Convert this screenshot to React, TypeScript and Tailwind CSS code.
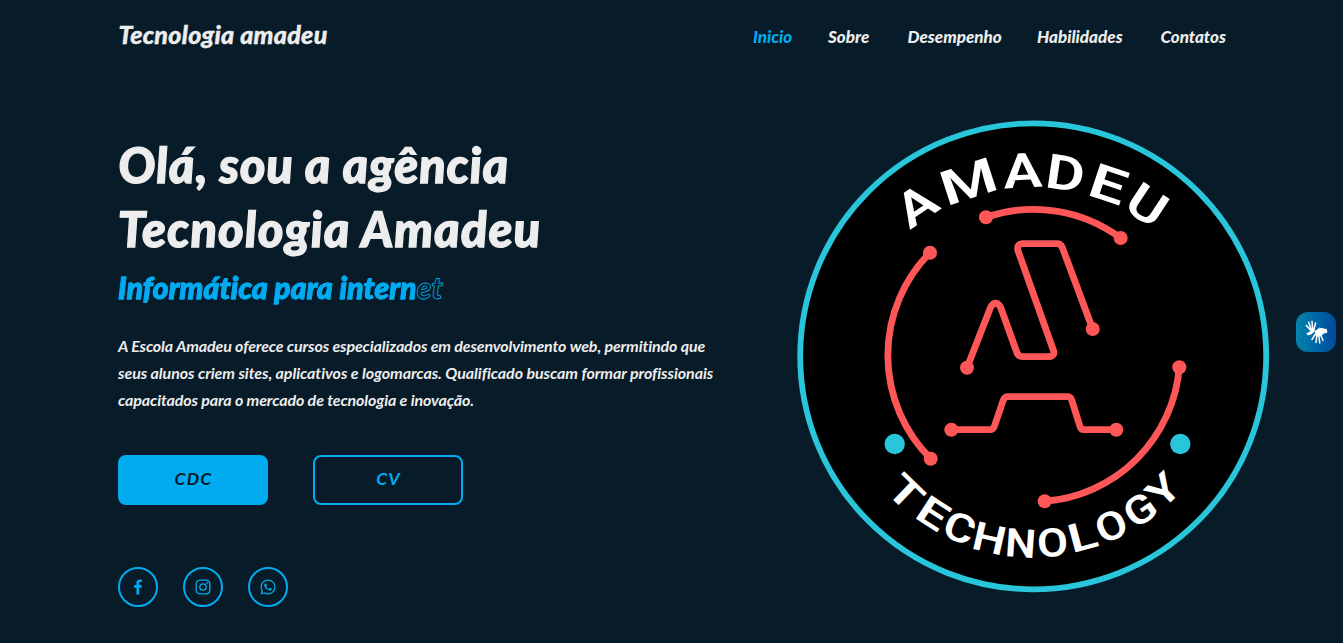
import { BiLogoFacebook, BiLogoInstagram, BiLogoWhatsapp } from "react-icons/bi";

const links = [
  { label: "Inicio", box: "w-[75px] text-[#00abf0]" },
  { label: "Sobre", box: "w-[79.5px]" },
  { label: "Desempenho", box: "w-[129.5px]" },
  { label: "Habilidades", box: "w-[123.5px]" },
  { label: "Contatos", box: "w-[65.5px]" },
];

type Glyph = { ch: string; x: number; y: number; rot: number; w: number };

// Baseline centre, rotation and width of every letter on the upper arc
const topWord: Glyph[] = [
  { ch: "A", x: 926, y: 219, rot: -34, w: 39 },
  { ch: "M", x: 973.5, y: 197.5, rot: -18, w: 57 },
  { ch: "A", x: 1023.5, y: 187.5, rot: -3, w: 39 },
  { ch: "D", x: 1063, y: 190, rot: 8.5, w: 39 },
  { ch: "E", x: 1103, y: 200, rot: 18.5, w: 37 },
  { ch: "U", x: 1138, y: 219, rot: 33.3, w: 38 },
];

const bottomWord: Glyph[] = [
  { ch: "T", x: 896, y: 502.5, rot: 44, w: 34 },
  { ch: "E", x: 925.5, y: 525, rot: 33, w: 30 },
  { ch: "C", x: 954.3, y: 540.5, rot: 23, w: 31 },
  { ch: "H", x: 986.3, y: 552, rot: 13, w: 33 },
  { ch: "N", x: 1019.7, y: 557, rot: 4, w: 31 },
  { ch: "O", x: 1053.5, y: 556.5, rot: -4, w: 31 },
  { ch: "L", x: 1086, y: 549.5, rot: -15, w: 29 },
  { ch: "O", x: 1117, y: 538.5, rot: -25, w: 31 },
  { ch: "G", x: 1148, y: 521, rot: -35, w: 31 },
  { ch: "Y", x: 1172.7, y: 500, rot: -44, w: 30 },
];

const nodes = [
  [930, 252.7], [930.7, 458.7], [986, 217.3], [1120.7, 238], [1179.3, 367.3],
  [1044.7, 501.3], [967, 367.7], [1092.7, 329], [951.3, 429.7], [1116.3, 429.7],
];

function ArcWord({ glyphs, size }: { glyphs: Glyph[]; size: number }) {
  return (
    <g fill="#fff" fontSize={size} className="font-['Roboto',sans-serif] font-semibold">
      {glyphs.map((g, i) => (
        <text
          key={i}
          transform={`translate(${g.x} ${g.y}) rotate(${g.rot})`}
          x={-g.w / 2}
          textLength={g.w}
          lengthAdjust="spacingAndGlyphs"
        >
          {g.ch}
        </text>
      ))}
    </g>
  );
}

function Emblem() {
  return (
    <svg viewBox="797 120 473 473" className="h-[473px] w-[473px] shrink-0">
      <circle cx="1033.2" cy="356.3" r="233" fill="#000" stroke="#29c5da" strokeWidth="5.8" />
      <g fill="none" stroke="#ff5757" strokeWidth="6.8" strokeLinejoin="round">
        <path d="M930 252.7A146 146 0 0 0 930.7 458.7" />
        <path d="M986 217.3A146.5 146.5 0 0 1 1120.7 238" />
        <path d="M1179.3 367.3A146.5 146.5 0 0 1 1044.7 501.3" />
        <path d="M967 367.7L990.7 307Q995.5 299.5 1000.5 307L1016.5 351.5Q1018 356.7 1023 356.7H1049Q1055.5 356 1053.3 350L1017.9 250.5Q1016.5 244 1022.5 243.7H1057Q1060.7 243.7 1062.3 247.5L1092.7 329" />
        <path d="M951.3 429.7H990Q993 429.7 994.3 426.5L1003.3 400Q1004.5 396.7 1008 396.7H1067.5Q1070.5 396.7 1071.7 400L1080 426.5Q1081 429.7 1084 429.7H1116.3" />
      </g>
      <g fill="#ff5757">
        {nodes.map(([x, y]) => (
          <circle key={`${x}-${y}`} cx={x} cy={y} r="7" />
        ))}
      </g>
      <circle cx="894.7" cy="444" r="10.2" fill="#29c5da" />
      <circle cx="1180.3" cy="444" r="10.2" fill="#29c5da" />
      <ArcWord glyphs={topWord} size={48} />
      <ArcWord glyphs={bottomWord} size={39.5} />
    </svg>
  );
}

function HandsIcon() {
  return (
    <svg viewBox="0 0 40 40" className="h-10 w-10" fill="none" stroke="#fff" strokeLinecap="round" strokeLinejoin="round">
      <g strokeWidth="1.5">
        <path d="M14.5 18L10.3 13.5M15 17L12.6 10.3M16.5 16.5L16 9.3M18 17L19.6 11" />
        <path d="M24.8 23L27 28.5M22.8 24L23.8 31M20.8 24L20 30.5M19 22.5L16 27.5" />
      </g>
      <path d="M14.5 17.5L18 16.5L18.5 19L16 21.5L12 23L10.8 21.5L14.5 20Z" fill="#fff" strokeWidth="1" />
      <path d="M19.5 21L19.3 19.3L23.5 16.2L30.5 17.5L30.8 20.5L27.5 21L25 24L20.5 24Z" fill="#fff" strokeWidth="1" />
    </svg>
  );
}

const social = "flex h-10 w-10 items-center justify-center rounded-full border-2 border-[#00abf0] text-[20px] text-[#00abf0]";

export default function App() {
  return (
    <div className="relative h-[643px] w-full overflow-hidden bg-[#081b29] font-['Lato','Noto_Sans',sans-serif] text-[#ededed] italic">
      <header className="flex h-[70px] items-center justify-between pr-[117px] pl-[118.5px]">
        <a className="pb-[2px] text-[25px] leading-[30px] font-black tracking-[0.3px] [-webkit-text-stroke:0.4px_#ededed]">Tecnologia amadeu</a>
        <nav className="flex pt-[3px] text-[17px] leading-5 font-black">
          {links.map((l) => (
            <a key={l.label} className={l.box}>{l.label}</a>
          ))}
        </nav>
      </header>

      <main className="flex justify-between pr-[73px] pl-[118px]">
        <section className="w-[600px] pt-[62px]">
          <h1 className="pl-[1.5px] text-[49px] leading-[64px] font-black whitespace-nowrap [-webkit-text-stroke:1.3px_#ededed]">
            <span className="block origin-bottom-left skew-x-[3deg] tracking-[0.75px]">Olá, sou a agência</span>
            <span className="block origin-bottom-left skew-x-[3deg] tracking-[1.05px]">Tecnologia Amadeu</span>
          </h1>
          <h3 className="mt-[8px] w-fit bg-[linear-gradient(90deg,#00abf0_297px,transparent_297px)] bg-clip-text text-[30px] leading-[38px] font-black tracking-[0.15px] whitespace-nowrap text-transparent [-webkit-text-stroke:0.8px_#00abf0]">
            Informática para internet
          </h3>
          <p className="mt-[26px] text-[16px] leading-[27px] font-bold whitespace-nowrap">
            <span className="block tracking-[-0.12px]">A Escola Amadeu oferece cursos especializados em desenvolvimento web, permitindo que</span>
            <span className="block tracking-[-0.065px]">seus alunos criem sites, aplicativos e logomarcas. Qualificado buscam formar profissionais</span>
            <span className="block tracking-[-0.11px]">capacitados para o mercado de tecnologia e inovação.</span>
          </p>
          <div className="mt-[42px] flex gap-[45px] text-[17.6px] leading-[22px] font-bold tracking-[1.2px]">
            <a className="flex h-[50px] w-[150px] items-center justify-center rounded-lg border-2 border-[#00abf0] bg-[#00abf0] pb-[3px] pl-px text-[#081b29]">CDC</a>
            <a className="flex h-[50px] w-[150px] items-center justify-center rounded-lg border-2 border-[#00abf0] pb-[3px] pl-px text-[#00abf0]">CV</a>
          </div>
          <div className="mt-[62px] flex gap-[25px]">
            <a className={social}><BiLogoFacebook /></a>
            <a className={social}><BiLogoInstagram /></a>
            <a className={social}><BiLogoWhatsapp /></a>
          </div>
        </section>
        <div className="pt-[50px] not-italic">
          <Emblem />
        </div>
      </main>

      <button className="absolute top-[312px] right-[7px] h-10 w-10 rounded-xl bg-linear-to-r from-[#0783ad] to-[#00499c]">
        <HandsIcon />
      </button>
    </div>
  );
}
